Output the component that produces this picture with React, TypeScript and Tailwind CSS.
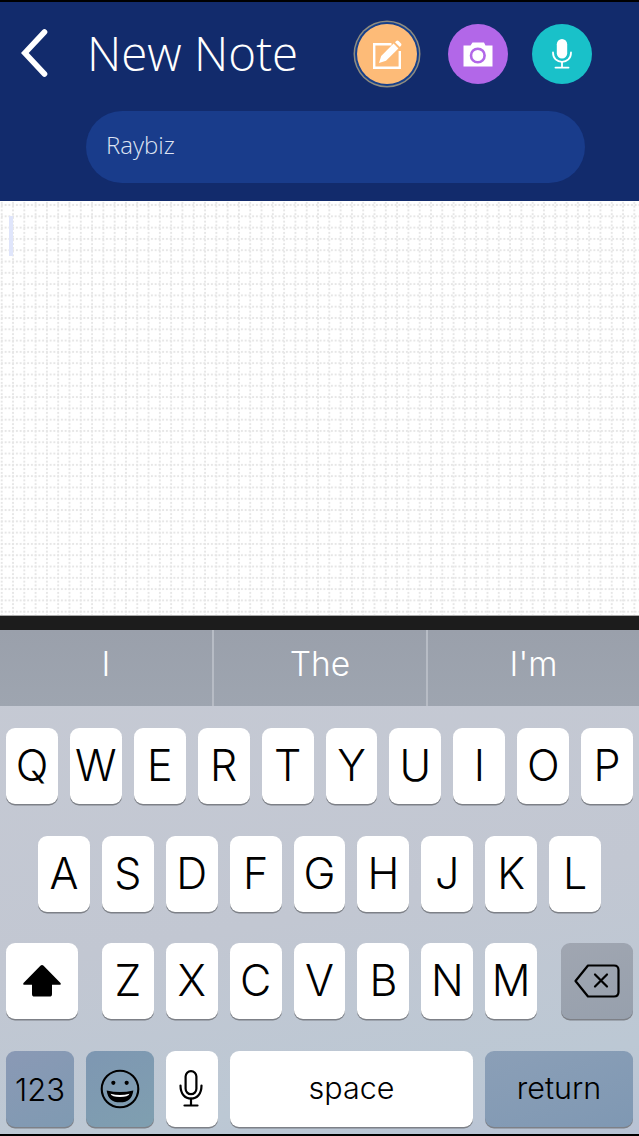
import React from "react";

const sans = "font-['Inter',Arial,sans-serif] font-[360]";

function Key({ label, className = "", text = "text-[43px] pb-[1px]" }: { label: React.ReactNode; className?: string; text?: string }) {
  return (
    <div
      className={`flex h-[76px] items-center justify-center rounded-[9px] bg-white text-black shadow-[0_1.5px_0_#7d8087] ${text} ${sans} ${className}`}
    >
      {label}
    </div>
  );
}

function Row({ keys }: { keys: string[] }) {
  return (
    <>
      {keys.map((k) => (
        <Key key={k} label={k} className="flex-1" />
      ))}
    </>
  );
}

function Chevron() {
  return (
    <svg className="mb-[2px]" width="27" height="48" viewBox="0 0 27 48" fill="none">
      <path d="M23.5 3 L3.8 24 L23.5 45" stroke="#fff" strokeWidth="5.6" strokeLinecap="round" strokeLinejoin="miter" />
    </svg>
  );
}

function NoteIcon() {
  return (
    <svg width="29" height="29" viewBox="0 0 29 29" fill="none">
      <path d="M18.5 4.2 H1.2 V27.8 H26.8 V11" stroke="#fff" strokeWidth="2.4" />
      <path d="M6 23 L8.2 16 L20.6 3.6 L25.4 8.4 L13 20.8 Z" fill="#fff" />
      <path d="M22 2.2 L23.2 1 Q24.4 0 25.6 1 L28 3.4 Q29 4.6 28 5.8 L26.8 7 Z" fill="#fff" />
    </svg>
  );
}

function CameraIcon() {
  return (
    <svg width="30" height="25" viewBox="0 0 30 25" fill="none">
      <path d="M0.5 3.5 H7.5 L9.5 0.5 H21 L22.5 3.5 H29.5 V24.5 H0.5 Z" fill="#fff" />
      <circle cx="14.8" cy="13.5" r="6.8" fill="#fff" stroke="#b267e8" strokeWidth="2.6" />
    </svg>
  );
}

function MicIcon({ color = "#fff" }: { color?: string }) {
  return (
    <svg width="20" height="30" viewBox="0 0 20 30" fill="none">
      <rect x="4.8" y="0" width="10.4" height="19.5" rx="5.2" fill={color} />
      <path d="M1 13.5 C1 19.5 5 22.8 10 22.8 C15 22.8 19 19.5 19 13.5" stroke={color} strokeWidth="1.8" strokeLinecap="round" />
      <path d="M10 22.8 V28" stroke={color} strokeWidth="1.8" />
      <path d="M3.5 28.6 H16.5" stroke={color} strokeWidth="1.9" strokeLinecap="round" />
    </svg>
  );
}

function KeyMicIcon() {
  return (
    <svg className="mr-[2px]" width="24" height="37" viewBox="0 0 24 37" fill="none" stroke="#000" strokeWidth="2.2" strokeLinecap="round">
      <rect x="6.6" y="1.2" width="10.8" height="23" rx="5.4" />
      <path d="M1.5 15.5 C1.5 24 6 28.6 12 28.6 C18 28.6 22.5 24 22.5 15.5" />
      <path d="M12 28.6 V35" />
      <path d="M5.5 35.5 H18.5" />
    </svg>
  );
}

function ShiftIcon() {
  return (
    <svg width="40" height="33" viewBox="0 0 40 33" fill="#000">
      <path d="M20 1 Q20.8 1 21.6 1.8 L38.5 19 Q39.6 20.5 38 20.8 H30 V30 Q30 32.6 27.5 32.6 H12.5 Q10 32.6 10 30 V20.8 H2 Q0.4 20.5 1.5 19 L18.4 1.8 Q19.2 1 20 1 Z" />
    </svg>
  );
}

function EmojiIcon() {
  return (
    <svg width="40" height="40" viewBox="0 0 42 42" fill="none">
      <circle cx="21" cy="21" r="19.2" stroke="#000" strokeWidth="2.2" />
      <circle cx="14" cy="14.5" r="2.2" fill="#000" />
      <circle cx="28" cy="14.5" r="2.2" fill="#000" />
      <path d="M7 22.5 Q21 26 35 22.5 Q33.5 35 21 35 Q8.5 35 7 22.5 Z" fill="#000" />
      <path d="M11 26 Q21 28.5 31 26 Q29.5 29.5 21 29.5 Q12.5 29.5 11 26 Z" fill="#fff" />
    </svg>
  );
}

function DeleteIcon() {
  return (
    <svg width="46" height="34" viewBox="0 0 46 34" fill="none" stroke="#000" strokeWidth="2.2" strokeLinejoin="round">
      <path d="M14 1.5 H40 Q44.5 1.5 44.5 6 V28 Q44.5 32.5 40 32.5 H14 L1.5 17 Z" />
      <path d="M21 10.5 L33 22.5 M33 10.5 L21 22.5" strokeLinecap="round" />
    </svg>
  );
}

export default function App() {
  return (
    <div className="flex h-[1136px] w-[639px] flex-col overflow-hidden bg-white">
      <header className="flex h-[201px] flex-col border-t-[2px] border-black bg-[#122b6c]">
        <div className="mt-[22px] flex h-[60px] items-center pl-[21px] pr-[47px]">
          <Chevron />
          <h1 className="mb-[3px] ml-[39px] font-['Open_Sans',sans-serif] text-[47.5px] leading-none font-light text-white">New Note</h1>
          <div className="ml-auto flex h-[60px] w-[60px] items-center justify-center rounded-full bg-[#fdbb78] shadow-[0_0_0_2px_#17408c,0_0_0_3.5px_#8f8c7f]">
            <NoteIcon />
          </div>
          <div className="ml-[31px] flex h-[60px] w-[60px] items-center justify-center rounded-full bg-[#b267e8]">
            <CameraIcon />
          </div>
          <div className="ml-[24px] flex h-[60px] w-[60px] items-center justify-center rounded-full bg-[#19c1c9]">
            <MicIcon />
          </div>
        </div>
        <div className="ml-[86px] mt-[27px] flex h-[72px] w-[499px] items-center rounded-full bg-[#193c8b] pb-[4px] pl-[20px] font-['Open_Sans',sans-serif] text-[24px] font-light text-[#dde3f2]">
          Raybiz
        </div>
      </header>

      <main className="relative h-[415px] border-b border-[#a9a9a9] bg-white bg-[radial-gradient(circle,#e6e6e6_1px,transparent_1.5px),radial-gradient(circle,#e6e6e6_1px,transparent_1.5px)] bg-[size:11.3px_3.75px,3.75px_11.3px] bg-[position:-3.95px_0,0_-1.65px]">
        <div className="absolute left-[9px] top-[15px] h-[40px] w-[4px] bg-[#dfe5fb]" />
      </main>

      <div className="h-[14px] bg-[#1c1c1c]" />

      <section className="flex flex-1 flex-col bg-[linear-gradient(170deg,#c6cad4_0%,#c2c7d2_55%,#bcc8d4_85%,#b8c2d4_100%)]">
        <div className={`flex h-[76px] bg-[linear-gradient(to_bottom,#9aa0ab,#9ea5b0)] text-[33.5px] text-white ${sans}`}>
          <div className="flex w-[212px] items-center justify-center pb-[7px]">I</div>
          <div className="w-[2px] bg-[#b7bcc5]" />
          <div className="flex flex-1 items-center justify-center pb-[7px]">The</div>
          <div className="w-[2px] bg-[#b7bcc5]" />
          <div className="flex w-[211px] items-center justify-center pb-[7px]">I'm</div>
        </div>

        <div className="mt-[22px] flex gap-3 px-[6px]">
          <Row keys={["Q", "W", "E", "R", "T", "Y", "U", "I", "O", "P"]} />
        </div>
        <div className="mt-[32px] flex gap-3 px-[38px]">
          <Row keys={["A", "S", "D", "F", "G", "H", "J", "K", "L"]} />
        </div>
        <div className="mt-[31px] flex gap-3 px-[6px]">
          <Key label={<ShiftIcon />} className="mr-3 w-[72px]" />
          <Row keys={["Z", "X", "C", "V", "B", "N", "M"]} />
          <Key label={<DeleteIcon />} className="ml-3 w-[72px] bg-[linear-gradient(160deg,#a0a6b1,#97a0ad)]" />
        </div>
        <div className="mt-[32px] flex gap-3 px-[6px]">
          <Key label="123" text="text-[31px]" className="w-[68px] bg-[linear-gradient(150deg,#8a99b5,#7f9ab2)] pt-[2px]" />
          <Key label={<EmojiIcon />} className="w-[68px] bg-[linear-gradient(150deg,#7e97b2,#7f9fb0)]" />
          <Key label={<KeyMicIcon />} className="w-[52px]" />
          <Key label="space" text="text-[30.5px]" className="w-[243px] pb-[2px]" />
          <Key label="return" text="text-[30.5px]" className="flex-1 bg-[linear-gradient(160deg,#8b9fb7,#7f98b3)] pb-[2px]" />
        </div>
        <div className="mt-auto h-[2px] bg-black" />
      </section>
    </div>
  );
}
